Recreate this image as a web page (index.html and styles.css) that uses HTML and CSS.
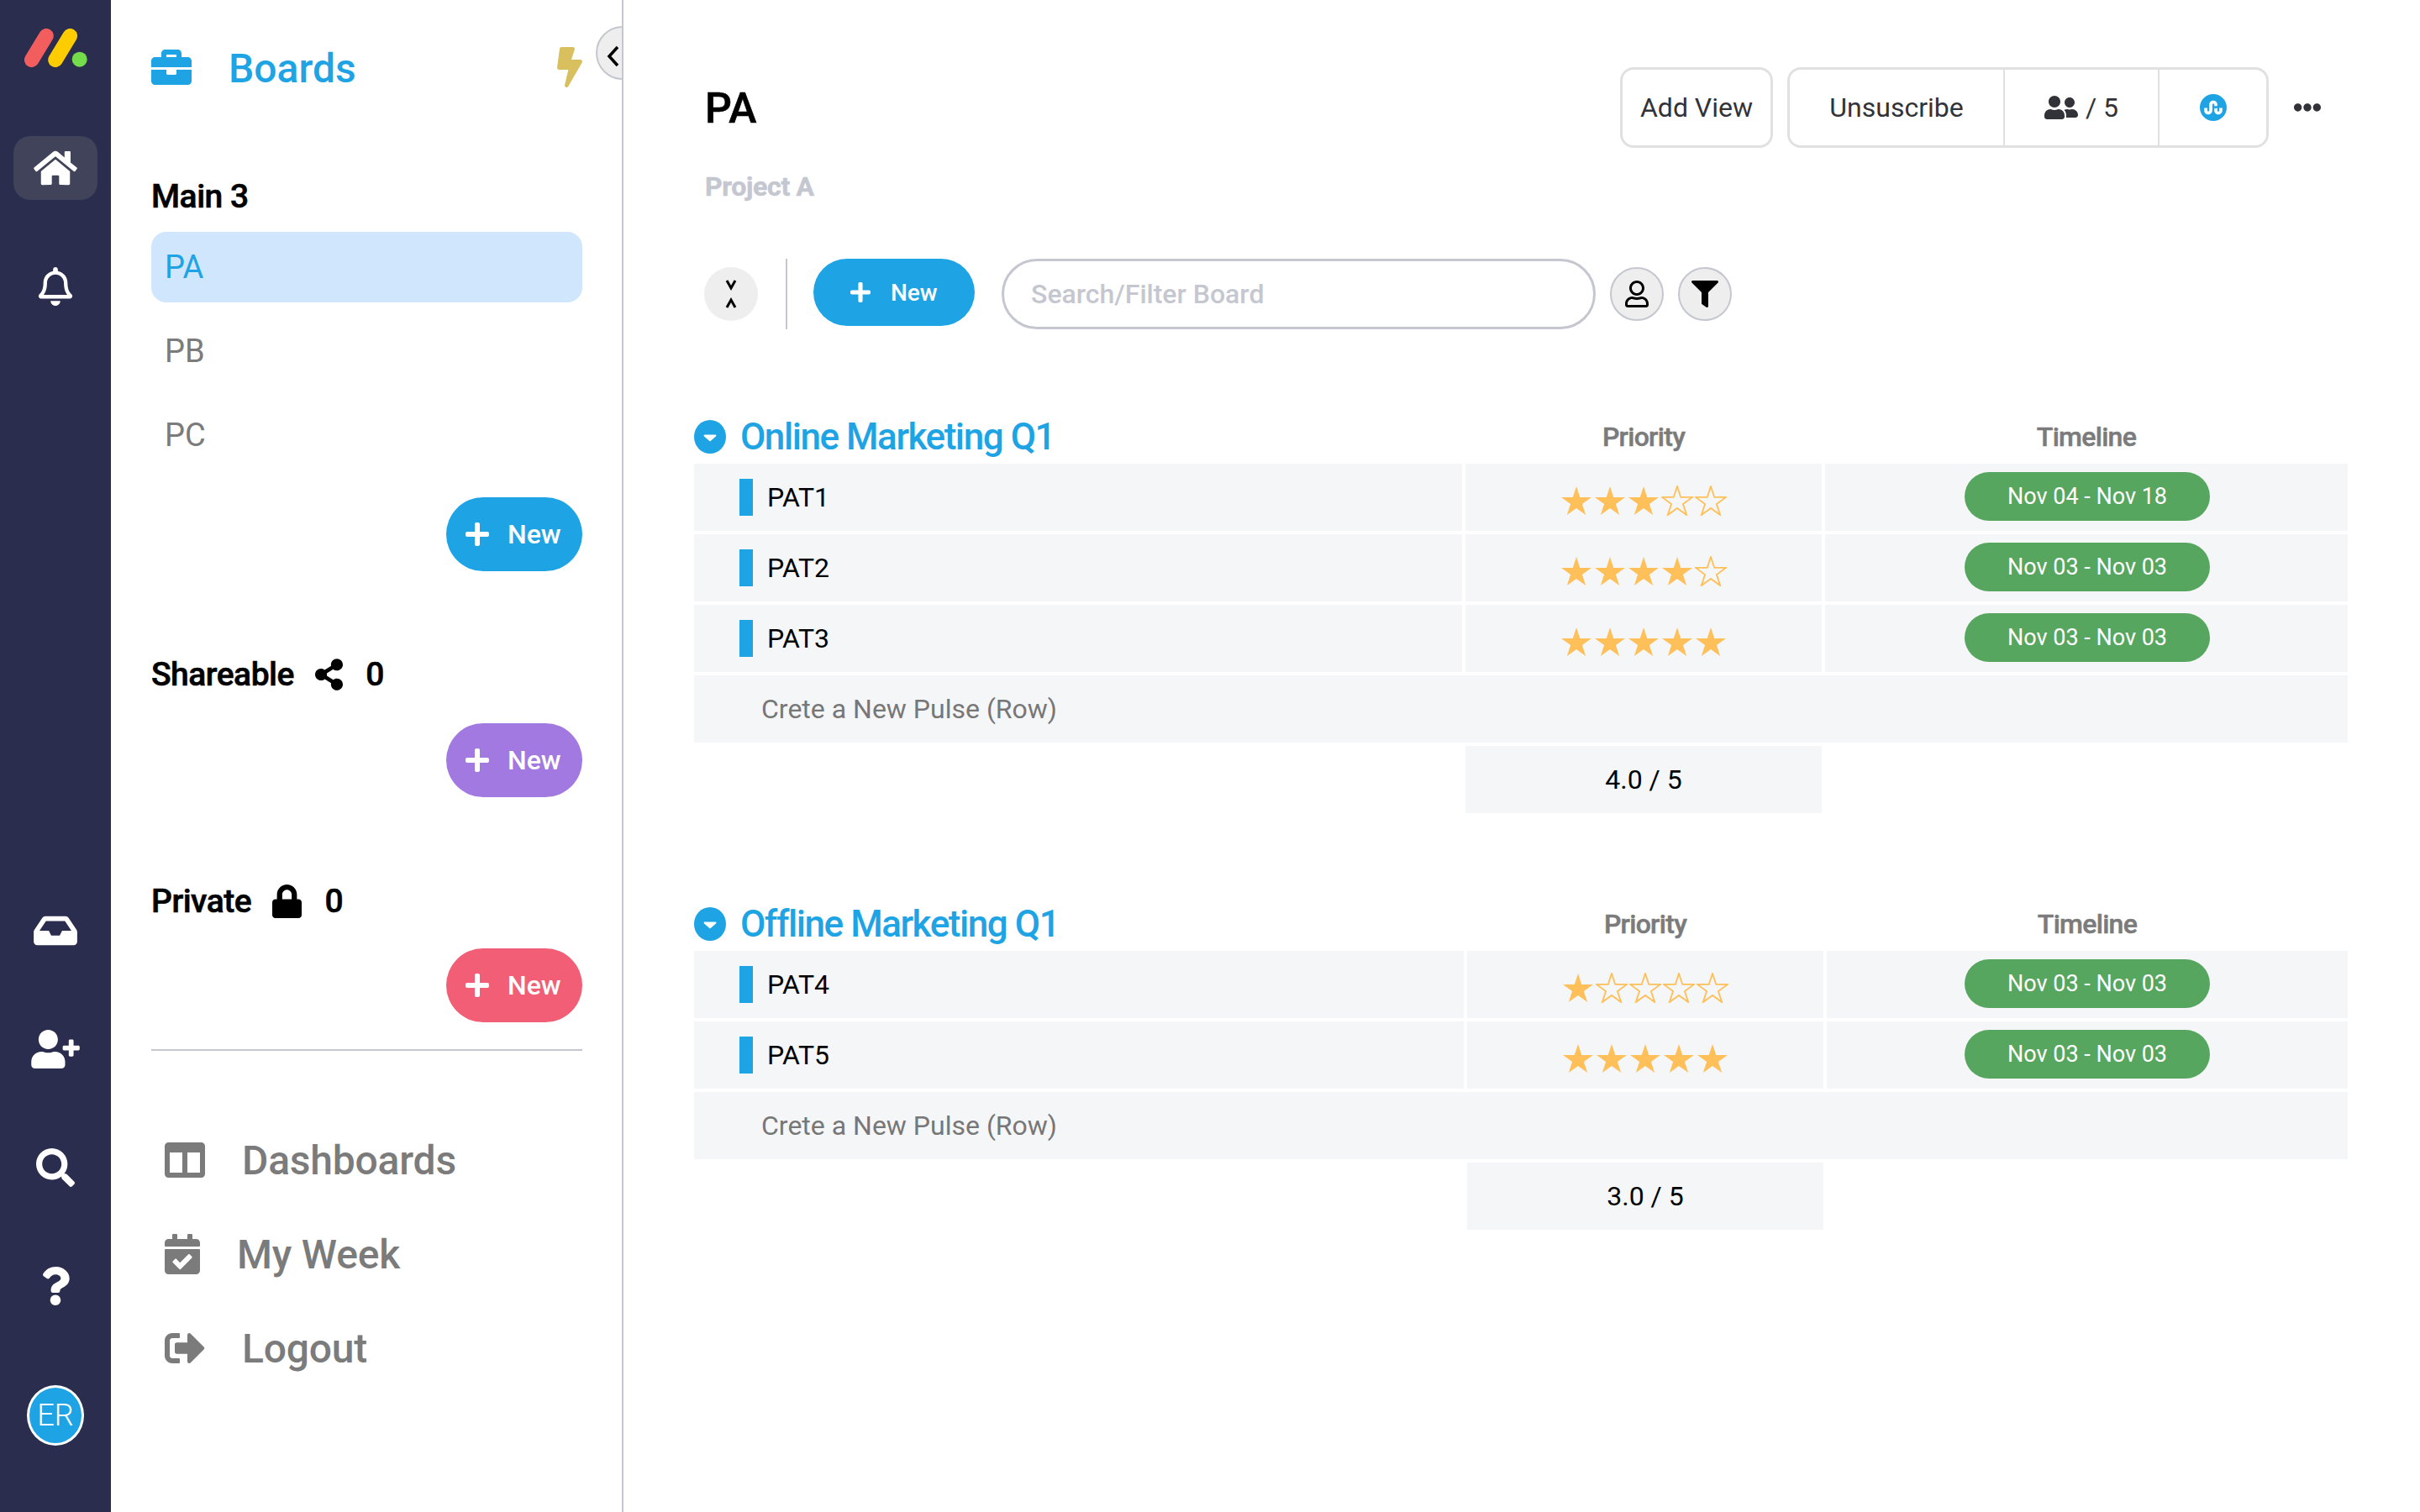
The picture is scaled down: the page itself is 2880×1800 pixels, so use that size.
FILE: index.html

```html
<!DOCTYPE html>
<html lang="en">
<head>
    <meta charset="UTF-8">
    <title>Boards - PA</title>
    <link rel="stylesheet" href="styles.css">
</head>
<body>
<svg class="sprite" xmlns="http://www.w3.org/2000/svg">
    <symbol id="i-home" viewBox="0 0 576 512"><path d="M280.37 148.26L96 300.11V464a16 16 0 0 0 16 16l112.06-.29a16 16 0 0 0 15.92-16V368a16 16 0 0 1 16-16h64a16 16 0 0 1 16 16v95.64a16 16 0 0 0 16 16.05L464 480a16 16 0 0 0 16-16V300L295.67 148.26a12.19 12.19 0 0 0-15.3 0zM571.6 251.47L488 182.56V44.05a12 12 0 0 0-12-12h-56a12 12 0 0 0-12 12v72.61L318.47 43a48 48 0 0 0-61 0L4.34 251.47a12 12 0 0 0-1.6 16.9l25.5 31A12 12 0 0 0 45.15 301l235.22-193.74a12.19 12.19 0 0 1 15.3 0L530.9 301a12 12 0 0 0 16.9-1.6l25.5-31a12 12 0 0 0-1.7-16.93z"/></symbol>
    <symbol id="i-bell" viewBox="0 0 448 512"><path d="M439.39 362.29c-19.32-20.76-55.47-51.99-55.47-154.29 0-77.7-54.48-139.9-127.94-155.16V32c0-17.67-14.32-32-31.98-32s-31.98 14.33-31.98 32v20.84C118.56 68.1 64.08 130.3 64.08 208c0 102.3-36.15 133.53-55.47 154.29-6 6.45-8.66 14.16-8.61 21.71.11 16.4 12.98 32 32.1 32h383.8c19.12 0 32-15.6 32.1-32 .05-7.55-2.61-15.27-8.61-21.71zM67.53 368c21.22-27.97 44.42-74.33 44.53-159.42 0-.2-.06-.38-.06-.58 0-61.86 50.14-112 112-112s112 50.14 112 112c0 .2-.06.38-.06.58.11 85.1 23.31 131.46 44.53 159.42H67.53zM224 512c35.32 0 63.97-28.65 63.97-64H160.03c0 35.35 28.65 64 63.97 64z"/></symbol>
    <symbol id="i-inbox" viewBox="0 0 576 512"><path d="M567.938 243.908L462.25 85.374A48.003 48.003 0 0 0 422.311 64H153.689a48 48 0 0 0-39.938 21.374L8.062 243.908A47.994 47.994 0 0 0 0 270.533V400c0 26.51 21.49 48 48 48h480c26.51 0 48-21.49 48-48V270.533a47.994 47.994 0 0 0-8.062-26.625zM162.252 128h251.497l85.333 128H376l-32 64H232l-32-64H76.918l85.334-128z"/></symbol>
    <symbol id="i-user-plus" viewBox="0 0 640 512"><path d="M624 208h-64v-64c0-8.8-7.2-16-16-16h-32c-8.8 0-16 7.2-16 16v64h-64c-8.8 0-16 7.2-16 16v32c0 8.8 7.2 16 16 16h64v64c0 8.8 7.2 16 16 16h32c8.8 0 16-7.2 16-16v-64h64c8.8 0 16-7.2 16-16v-32c0-8.8-7.2-16-16-16zm-400 48c70.7 0 128-57.3 128-128S294.7 0 224 0 96 57.3 96 128s57.3 128 128 128zm89.6 32h-16.7c-22.2 10.2-46.9 16-72.9 16s-50.6-5.8-72.9-16h-16.7C60.2 288 0 348.2 0 422.4V464c0 26.5 21.5 48 48 48h352c26.5 0 48-21.5 48-48v-41.6c0-74.2-60.2-134.4-134.4-134.4z"/></symbol>
    <symbol id="i-search" viewBox="0 0 512 512"><path d="M505 442.7L405.3 343c-4.5-4.5-10.6-7-17-7H372c27.6-35.3 44-79.7 44-128C416 93.1 322.9 0 208 0S0 93.1 0 208s93.1 208 208 208c48.3 0 92.7-16.4 128-44v16.3c0 6.4 2.5 12.5 7 17l99.7 99.7c9.4 9.4 24.6 9.4 33.9 0l28.3-28.3c9.4-9.4 9.4-24.6.1-34zM208 336c-70.7 0-128-57.2-128-128 0-70.7 57.2-128 128-128 70.7 0 128 57.2 128 128 0 70.7-57.2 128-128 128z"/></symbol>
    <symbol id="i-question" viewBox="0 0 384 512"><path d="M202.021 0C122.202 0 70.503 32.703 29.914 91.026c-7.363 10.58-5.093 25.086 5.178 32.874l43.138 32.709c10.373 7.865 25.132 6.026 33.253-4.148 25.049-31.381 43.63-49.449 82.757-49.449 30.764 0 68.816 19.799 68.816 49.631 0 22.552-18.617 34.134-48.993 51.164-35.423 19.86-82.299 44.576-82.299 106.405V320c0 13.255 10.745 24 24 24h72.471c13.255 0 24-10.745 24-24v-5.773c0-42.86 125.268-44.645 125.268-160.627C377.504 66.256 286.902 0 202.021 0zM192 373.459c-38.196 0-69.271 31.075-69.271 69.271 0 38.195 31.075 69.27 69.271 69.27s69.271-31.075 69.271-69.271-31.075-69.27-69.271-69.27z"/></symbol>
    <symbol id="i-briefcase" viewBox="0 0 512 512"><path d="M320 336c0 8.84-7.16 16-16 16h-96c-8.84 0-16-7.16-16-16v-48H0v144c0 25.6 22.4 48 48 48h416c25.6 0 48-22.4 48-48V288H320v48zm144-208h-80V80c0-25.6-22.4-48-48-48H176c-25.6 0-48 22.4-48 48v48H48c-25.6 0-48 22.4-48 48v80h512v-80c0-25.6-22.4-48-48-48zm-144 0H192V96h128v32z"/></symbol>
    <symbol id="i-bolt" viewBox="0 0 320 512"><path d="M296 160H180.6l42.6-129.8C227.2 15 215.7 0 200 0H56C44 0 33.8 8.9 32.2 20.8l-32 240C-1.7 275.2 9.5 288 24 288h118.7L96.6 482.5c-3.6 15.2 8 29.5 23.3 29.5 8.4 0 16.4-4.4 20.8-12l176-304c9.3-15.9-2.2-36-20.7-36z"/></symbol>
    <symbol id="i-plus" viewBox="0 0 448 512"><path d="M416 208H272V64c0-17.67-14.33-32-32-32h-32c-17.67 0-32 14.33-32 32v144H32c-17.67 0-32 14.33-32 32v32c0 17.67 14.33 32 32 32h144v144c0 17.67 14.33 32 32 32h32c17.67 0 32-14.33 32-32V304h144c17.67 0 32-14.33 32-32v-32c0-17.67-14.33-32-32-32z"/></symbol>
    <symbol id="i-share" viewBox="0 0 448 512"><path d="M352 320c-22.608 0-43.387 7.819-59.79 20.895l-102.486-64.054a96.551 96.551 0 0 0 0-41.683l102.486-64.054C308.613 184.181 329.392 192 352 192c53.019 0 96-42.981 96-96S405.019 0 352 0s-96 42.981-96 96c0 7.158.79 14.13 2.276 20.841L155.79 180.895C139.387 167.819 118.608 160 96 160c-53.019 0-96 42.981-96 96s42.981 96 96 96c22.608 0 43.387-7.819 59.79-20.895l102.486 64.054A96.301 96.301 0 0 0 256 416c0 53.019 42.981 96 96 96s96-42.981 96-96-42.981-96-96-96z"/></symbol>
    <symbol id="i-lock" viewBox="0 0 448 512"><path d="M400 224h-24v-72C376 68.2 307.8 0 224 0S72 68.2 72 152v72H48c-26.5 0-48 21.5-48 48v192c0 26.5 21.5 48 48 48h352c26.5 0 48-21.5 48-48V272c0-26.5-21.5-48-48-48zm-104 0H152v-72c0-39.7 32.3-72 72-72s72 32.3 72 72v72z"/></symbol>
    <symbol id="i-columns" viewBox="0 0 512 512"><path d="M464 32H48C21.49 32 0 53.49 0 80v352c0 26.51 21.49 48 48 48h416c26.51 0 48-21.49 48-48V80c0-26.51-21.49-48-48-48zM224 416H64V160h160v256zm224 0H288V160h160v256z"/></symbol>
    <symbol id="i-calendar" viewBox="0 0 448 512"><path d="M436 160H12c-6.627 0-12-5.373-12-12v-36c0-26.51 21.49-48 48-48h48V12c0-6.627 5.373-12 12-12h40c6.627 0 12 5.373 12 12v52h128V12c0-6.627 5.373-12 12-12h40c6.627 0 12 5.373 12 12v52h48c26.51 0 48 21.49 48 48v36c0 6.627-5.373 12-12 12zM12 192h424c6.627 0 12 5.373 12 12v260c0 26.51-21.49 48-48 48H48c-26.51 0-48-21.49-48-48V204c0-6.627 5.373-12 12-12zm333.296 95.947l-28.169-28.398c-4.667-4.705-12.265-4.736-16.97-.068L194.12 364.665l-45.98-46.352c-4.667-4.705-12.266-4.736-16.971-.068l-28.397 28.17c-4.705 4.667-4.736 12.265-.068 16.97l82.601 83.269c4.667 4.705 12.265 4.736 16.97.068l142.953-141.805c4.705-4.667 4.736-12.265.068-16.97z"/></symbol>
    <symbol id="i-signout" viewBox="0 0 512 512"><path d="M497 273L329 441c-15 15-41 4.5-41-17v-96H152c-13.3 0-24-10.7-24-24v-96c0-13.3 10.7-24 24-24h136V88c0-21.4 25.9-32 41-17l168 168c9.3 9.4 9.3 24.6 0 34zM192 436v-40c0-6.6-5.4-12-12-12H96c-17.7 0-32-14.3-32-32V160c0-17.7 14.3-32 32-32h84c6.6 0 12-5.4 12-12V76c0-6.6-5.4-12-12-12H96c-53 0-96 43-96 96v192c0 53 43 96 96 96h84c6.6 0 12-5.4 12-12z"/></symbol>
    <symbol id="i-users" viewBox="0 0 640 512"><path d="M192 256c61.9 0 112-50.1 112-112S253.9 32 192 32 80 82.1 80 144s50.1 112 112 112zm76.8 32h-8.3c-20.8 10-43.9 16-68.5 16s-47.6-6-68.5-16h-8.3C51.6 288 0 339.6 0 403.2V432c0 26.5 21.5 48 48 48h288c26.5 0 48-21.5 48-48v-28.8c0-63.6-51.6-115.2-115.2-115.2zM480 256c53 0 96-43 96-96s-43-96-96-96-96 43-96 96 43 96 96 96zm48 32h-3.8c-13.9 4.8-28.6 8-44.2 8s-30.3-3.2-44.2-8H432c-20.4 0-39.2 5.9-55.7 15.4 24.4 26.3 39.7 61.2 39.7 99.8v38.4c0 2.2-.5 4.3-.6 6.4H592c26.5 0 48-21.5 48-48 0-61.9-50.1-112-112-112z"/></symbol>
    <symbol id="i-stumble" viewBox="8 8 496 496"><path d="M256 8C119 8 8 119 8 256s111 248 248 248 248-111 248-248S393 8 256 8zm0 177.5c-9.8 0-17.8 8-17.8 17.8v106.9c0 40.9-33.9 73.9-74.9 73.9-41.4 0-74.9-33.5-74.9-74.9v-46.5h57.3v45.8c0 10 8 17.8 17.8 17.8s17.9-7.9 17.9-17.8V200.1c0-40 34.2-72.1 74.7-72.1 40.7 0 74.7 32.3 74.7 72.6v23.7l-34.1 10.1-22.9-10.7v-20.6c.1-9.6-7.9-17.6-17.8-17.6zm167 125.1c0 41.4-33.5 74.9-74.9 74.9-40.8 0-74.9-32.9-74.9-73.9v-46.9l22.9 10.7 34.1-10.1v47.1c0 9.8 8 17.6 17.8 17.6s17.9-7.9 17.9-17.6v-48h57.3c-.2 45.9-.2 46.2-.2 46.2z"/></symbol>
    <symbol id="i-ellipsis" viewBox="8 184 496 144"><path d="M328 256c0 39.8-32.2 72-72 72s-72-32.2-72-72 32.2-72 72-72 72 32.2 72 72zm104-72c-39.8 0-72 32.2-72 72s32.2 72 72 72 72-32.2 72-72-32.2-72-72-72zm-352 0c-39.8 0-72 32.2-72 72s32.2 72 72 72 72-32.2 72-72-32.2-72-72-72z"/></symbol>
    <symbol id="i-user" viewBox="0 0 448 512"><path d="M313.6 304c-28.7 0-42.5 16-89.6 16-47.1 0-60.8-16-89.6-16C60.2 304 0 364.2 0 438.4V464c0 26.5 21.5 48 48 48h352c26.5 0 48-21.5 48-48v-25.6c0-74.2-60.2-134.4-134.4-134.4zM400 464H48v-25.6c0-47.6 38.8-86.4 86.4-86.4 14.6 0 38.3 16 89.6 16 51.7 0 74.9-16 89.6-16 47.6 0 86.4 38.8 86.4 86.4V464zM224 288c79.5 0 144-64.5 144-144S303.5 0 224 0 80 64.5 80 144s64.5 144 144 144zm0-240c52.9 0 96 43.1 96 96s-43.1 96-96 96-96-43.1-96-96 43.1-96 96-96z"/></symbol>
    <symbol id="i-filter" viewBox="0 0 512 512"><path d="M487.976 0H24.028C2.71 0-8.047 25.866 7.058 40.971L192 225.941V432c0 7.831 3.821 15.17 10.237 19.662l80 55.98C298.02 518.69 320 507.493 320 487.98V225.941l184.947-184.97C520.021 25.896 509.338 0 487.976 0z"/></symbol>
    <symbol id="i-star" viewBox="-1 -1 40 38"><polygon points="19,0 23.5,13.7 38,13.7 26.3,22.3 30.8,36 19,27.5 7.2,36 11.7,22.3 0,13.7 14.5,13.7"/></symbol>
</svg>

<nav class="rail">
    <svg class="logo" viewBox="0 0 75 46">
        <line class="logo-red" x1="8.7" y1="37.3" x2="26" y2="8.7"/>
        <line class="logo-yellow" x1="37" y1="37.3" x2="54.3" y2="8.7"/>
        <circle class="logo-green" cx="65.7" cy="36.7" r="9"/>
    </svg>
    <div class="rail-group">
        <a class="rail-item active"><svg class="rail-icon"><use href="#i-home"/></svg></a>
        <a class="rail-item"><svg class="rail-icon"><use href="#i-bell"/></svg></a>
    </div>
    <div class="rail-group rail-bottom">
        <a class="rail-item"><svg class="rail-icon"><use href="#i-inbox"/></svg></a>
        <a class="rail-item"><svg class="rail-icon"><use href="#i-user-plus"/></svg></a>
        <a class="rail-item"><svg class="rail-icon"><use href="#i-search"/></svg></a>
        <a class="rail-item"><svg class="rail-icon"><use href="#i-question"/></svg></a>
        <a class="rail-item avatar-item"><span class="avatar">ER</span></a>
    </div>
</nav>

<aside class="panel">
    <button class="collapse">
        <svg viewBox="0 0 16 26"><polyline points="13,2 3,13 13,24"/></svg>
    </button>
    <div class="panel-head">
        <svg class="head-icon"><use href="#i-briefcase"/></svg>
        <span class="panel-title">Boards</span>
        <svg class="bolt"><use href="#i-bolt"/></svg>
    </div>

    <h3 class="section-title first">Main 3</h3>
    <ul class="board-list">
        <li class="board active">PA</li>
        <li class="board">PB</li>
        <li class="board">PC</li>
    </ul>
    <button class="new-btn blue first-btn"><svg class="plus"><use href="#i-plus"/></svg>New</button>

    <h3 class="section-title share">Shareable <svg class="share-icon"><use href="#i-share"/></svg> 0</h3>
    <button class="new-btn purple"><svg class="plus"><use href="#i-plus"/></svg>New</button>

    <h3 class="section-title private">Private <svg class="lock-icon"><use href="#i-lock"/></svg> 0</h3>
    <button class="new-btn red"><svg class="plus"><use href="#i-plus"/></svg>New</button>

    <hr class="panel-rule">

    <div class="menu">
        <a class="menu-item"><svg class="menu-columns"><use href="#i-columns"/></svg>Dashboards</a>
        <a class="menu-item"><svg class="menu-calendar"><use href="#i-calendar"/></svg>My Week</a>
        <a class="menu-item"><svg class="menu-columns"><use href="#i-signout"/></svg>Logout</a>
    </div>
</aside>

<main class="board-view">
    <header class="page-head">
        <h1 class="page-title">PA</h1>
        <div class="actions">
            <button class="action-box add-view">Add View</button>
            <div class="action-box action-group">
                <span class="action-cell unsub">Unsuscribe</span>
                <span class="action-cell members"><svg class="users-icon"><use href="#i-users"/></svg>/ 5</span>
                <span class="action-cell stumble"><svg class="stumble-icon"><use href="#i-stumble"/></svg></span>
            </div>
            <svg class="more"><use href="#i-ellipsis"/></svg>
        </div>
    </header>
    <p class="subtitle">Project A</p>

    <div class="toolbar">
        <button class="round-btn plain">
            <svg viewBox="0 0 14 36"><polyline points="2,2 7,11 12,2"/><polyline points="2,34 7,25 12,34"/></svg>
        </button>
        <span class="toolbar-rule"></span>
        <button class="new-btn blue toolbar-new"><svg class="plus small"><use href="#i-plus"/></svg>New</button>
        <input class="search" type="text" placeholder="Search/Filter Board">
        <button class="round-btn"><svg class="round-icon user"><use href="#i-user"/></svg></button>
        <button class="round-btn"><svg class="round-icon"><use href="#i-filter"/></svg></button>
    </div>

    <section class="group group-one">
        <div class="group-title">
            <span class="caret"><svg viewBox="0 0 38 40"><path d="M12.500 17.500h13a1 1 0 0 1 .7 1.700l-6.500 5.800a1 1 0 0 1-1.400 0l-6.500-5.800a1 1 0 0 1 .7-1.700z"/></svg></span>
            <span>Online Marketing Q1</span>
        </div>
        <div class="col-head">Priority</div>
        <div class="col-head">Timeline</div>

        <div class="cell name"><span class="bar"></span>PAT1</div>
        <div class="cell stars">
            <svg class="star"><use href="#i-star"/></svg><svg class="star"><use href="#i-star"/></svg><svg class="star"><use href="#i-star"/></svg><svg class="star empty"><use href="#i-star"/></svg><svg class="star empty"><use href="#i-star"/></svg>
        </div>
        <div class="cell dates"><span class="pill">Nov 04 - Nov 18</span></div>

        <div class="cell name"><span class="bar"></span>PAT2</div>
        <div class="cell stars">
            <svg class="star"><use href="#i-star"/></svg><svg class="star"><use href="#i-star"/></svg><svg class="star"><use href="#i-star"/></svg><svg class="star"><use href="#i-star"/></svg><svg class="star empty"><use href="#i-star"/></svg>
        </div>
        <div class="cell dates"><span class="pill">Nov 03 - Nov 03</span></div>

        <div class="cell name"><span class="bar"></span>PAT3</div>
        <div class="cell stars">
            <svg class="star"><use href="#i-star"/></svg><svg class="star"><use href="#i-star"/></svg><svg class="star"><use href="#i-star"/></svg><svg class="star"><use href="#i-star"/></svg><svg class="star"><use href="#i-star"/></svg>
        </div>
        <div class="cell dates"><span class="pill">Nov 03 - Nov 03</span></div>

        <div class="cell add-row">Crete a New Pulse (Row)</div>
        <div class="cell summary">4.0 / 5</div>
    </section>

    <section class="group group-two">
        <div class="group-title">
            <span class="caret"><svg viewBox="0 0 38 40"><path d="M12.500 17.500h13a1 1 0 0 1 .7 1.700l-6.500 5.800a1 1 0 0 1-1.400 0l-6.500-5.800a1 1 0 0 1 .7-1.700z"/></svg></span>
            <span>Offline Marketing Q1</span>
        </div>
        <div class="col-head">Priority</div>
        <div class="col-head">Timeline</div>

        <div class="cell name"><span class="bar"></span>PAT4</div>
        <div class="cell stars">
            <svg class="star"><use href="#i-star"/></svg><svg class="star empty"><use href="#i-star"/></svg><svg class="star empty"><use href="#i-star"/></svg><svg class="star empty"><use href="#i-star"/></svg><svg class="star empty"><use href="#i-star"/></svg>
        </div>
        <div class="cell dates"><span class="pill">Nov 03 - Nov 03</span></div>

        <div class="cell name"><span class="bar"></span>PAT5</div>
        <div class="cell stars">
            <svg class="star"><use href="#i-star"/></svg><svg class="star"><use href="#i-star"/></svg><svg class="star"><use href="#i-star"/></svg><svg class="star"><use href="#i-star"/></svg><svg class="star"><use href="#i-star"/></svg>
        </div>
        <div class="cell dates"><span class="pill">Nov 03 - Nov 03</span></div>

        <div class="cell add-row">Crete a New Pulse (Row)</div>
        <div class="cell summary">3.0 / 5</div>
    </section>
</main>
</body>
</html>
```

FILE: styles.css

```css
* {
    box-sizing: border-box;
}
html, body {
    height: 100%;
}
body {
    margin: 0;
    display: flex;
    min-height: 1800px;
    background-color: #fff;
    font-family: "Roboto", "Liberation Sans", sans-serif;
    color: #000;
    overflow: hidden;
}
button {
    font-family: inherit;
    border: none;
    padding: 0;
}
svg {
    display: block;
    fill: currentColor;
    flex: none;
}
.sprite {
    display: none;
}

/* left rail */
.rail {
    width: 132px;
    flex: none;
    background-color: #2b2d4e;
    color: #fff;
    display: flex;
    flex-direction: column;
    align-items: center;
    padding: 34px 0 77px;
}
.logo {
    width: 75px;
    height: 46px;
    margin-bottom: 82px;
}
.logo line {
    stroke-width: 17.5;
    stroke-linecap: round;
}
.logo-red { stroke: #f25d5d; }
.logo-yellow { stroke: #ffcc00; }
.logo-green { fill: #75dc4c; }
.rail-group {
    display: flex;
    flex-direction: column;
    gap: 65px;
}
.rail-bottom {
    margin-top: auto;
}
.rail-item {
    width: 100px;
    height: 76px;
    display: flex;
    align-items: center;
    justify-content: center;
    border-radius: 20px;
}
.rail-item.active {
    background-color: #404359;
}
.rail-icon {
    width: 58px;
    height: 46px;
}
.avatar-item {
    margin-top: 13px;
}
.avatar {
    width: 68px;
    height: 72px;
    border-radius: 50%;
    border: 3px solid #fff;
    background-color: #1ea4e4;
    font-size: 36px;
    font-weight: 300;
    display: flex;
    align-items: center;
    justify-content: center;
}

/* boards panel */
.panel {
    width: 610px;
    flex: none;
    position: relative;
    overflow: hidden;
    border-right: 2px solid #c5c7d0;
    padding: 0 47px 0 48px;
    display: flex;
    flex-direction: column;
}
.collapse {
    position: absolute;
    left: 577px;
    top: 31px;
    width: 64px;
    height: 64px;
    border-radius: 50%;
    background-color: #eee;
    border: 2px solid #c5c7d0;
    padding: 7px 0 0 11px;
}
.collapse svg {
    width: 16px;
    height: 26px;
    fill: none;
    stroke: #000;
    stroke-width: 3.5;
}
.panel-head {
    height: 160px;
    display: flex;
    align-items: center;
    color: #1ea4e4;
}
.head-icon {
    width: 48px;
    height: 48px;
}
.panel-title {
    font-size: 48px;
    font-weight: 500;
    margin-left: 44px;
    padding-top: 2px;
}
.bolt {
    width: 30px;
    height: 50px;
    margin-left: auto;
    color: #d9c05f;
}
.section-title {
    margin: 0;
    height: 44px;
    font-size: 39px;
    font-weight: 500;
    letter-spacing: -0.5px;
    -webkit-text-stroke: 0.6px #000;
    display: flex;
    align-items: center;
    white-space: pre;
}
.section-title.first {
    margin-top: 52px;
}
.section-title.share {
    margin-top: 101px;
}
.section-title.private {
    margin-top: 102px;
}
.share-icon {
    width: 33px;
    height: 38px;
    margin: 0 18px 0 16px;
}
.lock-icon {
    width: 35px;
    height: 40px;
    margin: 0 18px 0 16px;
}
.board-list {
    list-style: none;
    margin: 20px 0 0;
    padding: 0;
    display: flex;
    flex-direction: column;
    gap: 16px;
}
.board {
    height: 84px;
    border-radius: 18px;
    padding-left: 16px;
    display: flex;
    align-items: center;
    font-size: 38px;
    color: #7b7b7b;
}
.board.active {
    background-color: #cfe6fd;
    color: #1ea4e4;
}
.new-btn {
    align-self: flex-end;
    width: 162px;
    height: 88px;
    border-radius: 44px;
    color: #fff;
    font-size: 32px;
    font-weight: 500;
    display: flex;
    align-items: center;
    padding-left: 23px;
}
.plus {
    width: 28px;
    height: 32px;
    margin-right: 22px;
}
.plus.small {
    width: 24px;
    height: 28px;
    margin-right: 24px;
}
.new-btn.blue { background-color: #1ea4e4; }
.new-btn.purple { background-color: #a179e0; margin-top: 36px; }
.new-btn.red { background-color: #f15e75; margin-top: 34px; }
.new-btn.first-btn { margin-top: 32px; }
.panel-rule {
    width: 100%;
    height: 2px;
    margin: 32px 0 0;
    border: none;
    background-color: #c5c7d0;
    flex: none;
}
.menu {
    margin-top: 74px;
    padding-left: 16px;
    display: flex;
    flex-direction: column;
}
.menu-item {
    height: 112px;
    display: flex;
    align-items: center;
    gap: 44px;
    font-size: 48px;
    font-weight: 500;
    letter-spacing: -0.2px;
    color: #7b7b7b;
}
.menu-columns {
    width: 48px;
    height: 48px;
}
.menu-calendar {
    width: 42px;
    height: 48px;
}

/* main board */
.board-view {
    flex: 1;
    min-width: 0;
    padding: 80px 86px 0 84px;
}
.page-head {
    display: flex;
    align-items: center;
    justify-content: space-between;
    padding: 0 32px 0 13px;
}
.page-title {
    margin: 0;
    padding-top: 2px;
    font-size: 50px;
    font-weight: 500;
    -webkit-text-stroke: 0.6px #000;
}
.actions {
    display: flex;
    align-items: center;
}
.action-box {
    height: 96px;
    border: 3px solid #e1e1e1;
    border-radius: 16px;
    background-color: #fff;
    font-size: 32px;
    color: #323338;
}
.add-view {
    width: 182px;
    margin-right: 17px;
}
.action-group {
    width: 573px;
    display: flex;
    margin-right: 30px;
}
.action-cell {
    display: flex;
    align-items: center;
    justify-content: center;
    height: 100%;
}
.unsub {
    width: 256px;
    border-right: 2px solid #e1e1e1;
}
.members {
    width: 184px;
    border-right: 2px solid #e1e1e1;
}
.stumble {
    flex: 1;
}
.users-icon {
    width: 40px;
    height: 32px;
    margin-right: 9px;
}
.stumble-icon {
    width: 32px;
    height: 32px;
    color: #1ea4e4;
}
.more {
    width: 32px;
    height: 10px;
    color: #323338;
}
.subtitle {
    margin: 26px 0 0 13px;
    font-size: 32px;
    line-height: 40px;
    font-weight: 700;
    letter-spacing: -0.3px;
    -webkit-text-stroke: 0.5px #c5c7d0;
    color: #c5c7d0;
}
.toolbar {
    display: flex;
    align-items: center;
    height: 84px;
    margin-top: 66px;
    padding-left: 12px;
}
.round-btn {
    width: 64px;
    height: 64px;
    border-radius: 50%;
    background-color: #eee;
    border: 2px solid #c5c7d0;
    display: flex;
    align-items: center;
    justify-content: center;
    flex: none;
    margin-left: 17px;
    color: #000;
}
.round-btn.plain {
    border: none;
    margin-left: 0;
}
.round-btn.plain svg {
    width: 14px;
    height: 36px;
    fill: none;
    stroke: #000;
    stroke-width: 3;
}
.round-icon {
    width: 34px;
    height: 32px;
}
.toolbar-rule {
    width: 2px;
    height: 84px;
    background-color: #c5c7d0;
    margin: 0 31px 0 33px;
}
.toolbar-new {
    width: 192px;
    height: 80px;
    border-radius: 40px;
    align-self: flex-start;
    font-size: 28px;
    padding-left: 44px;
}
.search {
    width: 707px;
    height: 84px;
    margin-left: 32px;
    border: 3px solid #c5c7d0;
    border-radius: 42px;
    padding: 0 32px;
    font-family: inherit;
    font-size: 32px;
    background-color: #fff;
    outline: none;
}
.search::placeholder {
    color: #c5c7d0;
    font-weight: 500;
    opacity: 1;
}

/* groups */
.group {
    display: grid;
    gap: 4px;
    grid-auto-rows: 80px;
    grid-template-rows: 48px;
}
.group-one {
    grid-template-columns: 914px 424px 622px;
    margin-top: 108px;
}
.group-two {
    grid-template-columns: 916px 424px 620px;
    margin-top: 112px;
}
.group-title {
    display: flex;
    align-items: center;
    gap: 17px;
    padding-bottom: 8px;
    font-size: 44px;
    font-weight: 500;
    letter-spacing: -1.45px;
    color: #1ea4e4;
    white-space: nowrap;
}
.caret {
    width: 38px;
    height: 40px;
    border-radius: 50%;
    background-color: #1ea4e4;
}
.caret svg {
    width: 38px;
    height: 40px;
    fill: #fff;
}
.col-head {
    display: flex;
    align-items: center;
    justify-content: center;
    padding-bottom: 8px;
    font-size: 32px;
    font-weight: 500;
    letter-spacing: -0.7px;
    -webkit-text-stroke: 0.5px #7b7b7b;
    color: #7b7b7b;
}
.cell {
    background-color: #f5f6f8;
    display: flex;
    align-items: center;
    font-size: 32px;
}
.name {
    padding-left: 54px;
}
.bar {
    width: 16px;
    height: 44px;
    margin-right: 17px;
    background-color: #1ea4e4;
}
.stars {
    justify-content: center;
    gap: 2px;
    padding-top: 8px;
}
.star {
    width: 38px;
    height: 36px;
    overflow: visible;
    fill: #ffc05a;
}
.star.empty {
    fill: none;
    stroke: #ffc05a;
    stroke-width: 2;
}
.dates {
    justify-content: center;
    align-items: flex-start;
    padding-top: 10px;
}
.group-one .dates {
    padding-left: 2px;
}
.pill {
    width: 292px;
    height: 58px;
    border-radius: 29px;
    background-color: #57a65f;
    color: #fff;
    font-size: 27px;
    display: flex;
    align-items: center;
    justify-content: center;
}
.add-row {
    grid-column: 1 / -1;
    padding-left: 80px;
    color: #777;
}
.summary {
    grid-column: 2;
    justify-content: center;
}
```
